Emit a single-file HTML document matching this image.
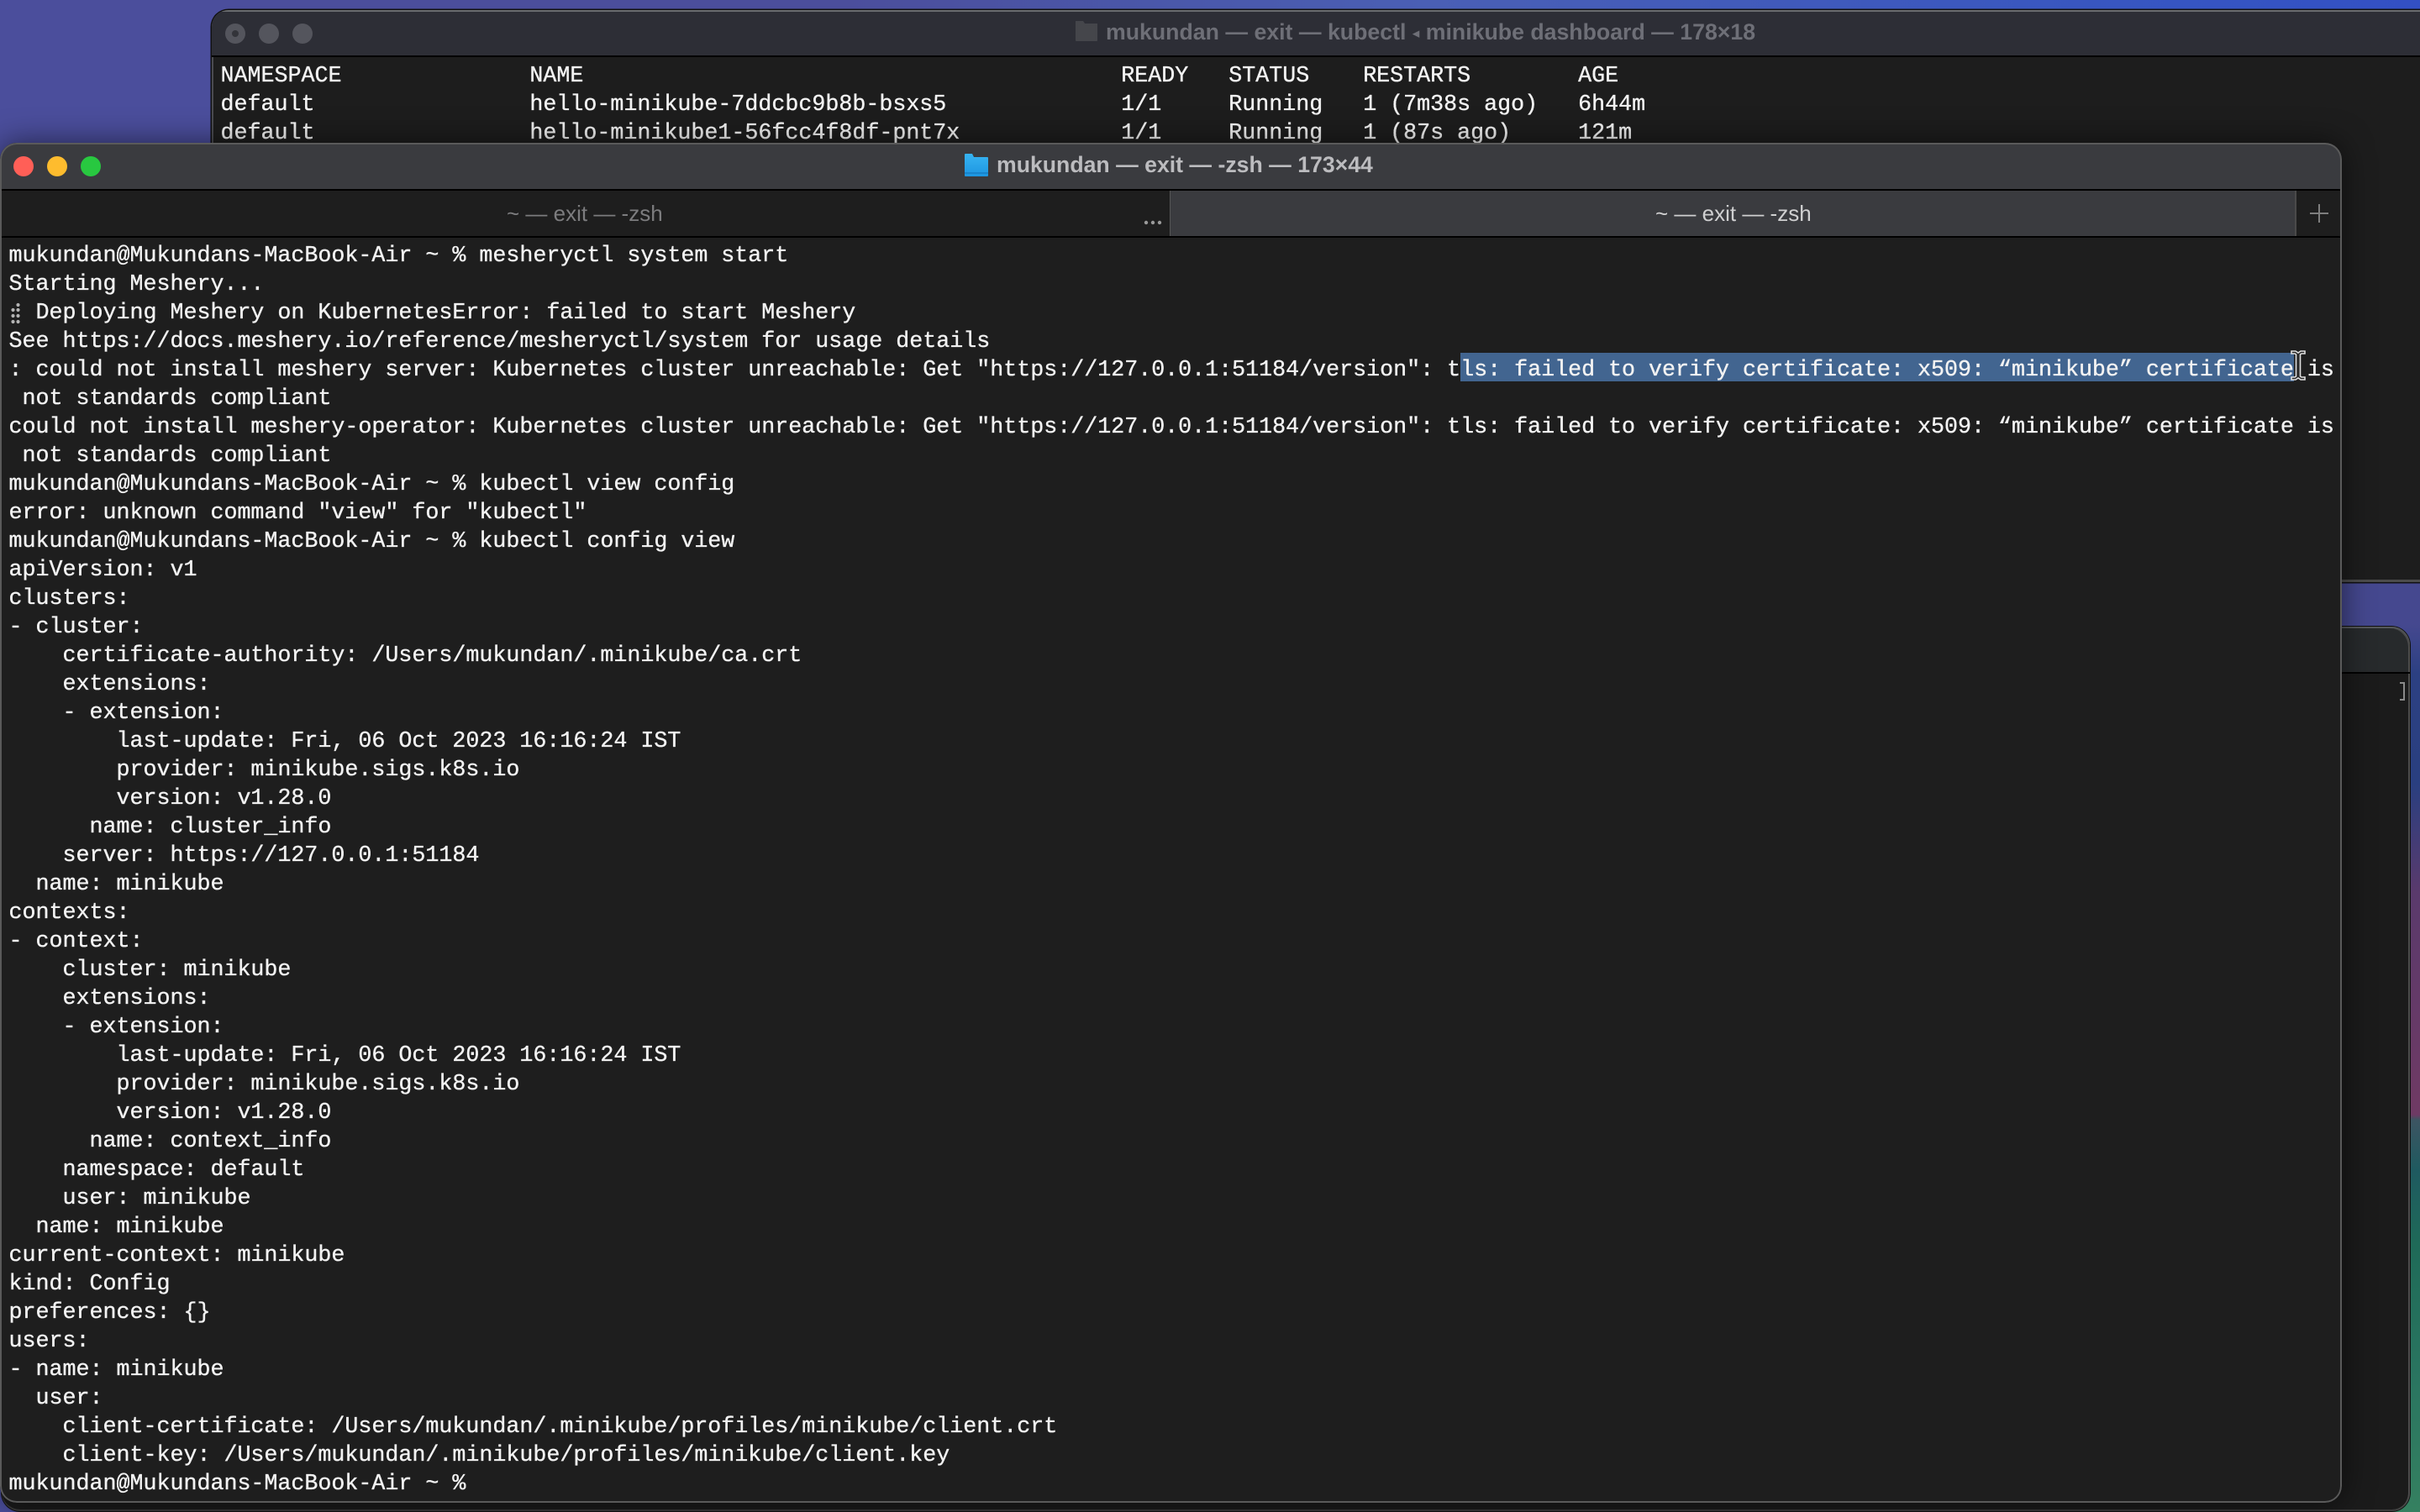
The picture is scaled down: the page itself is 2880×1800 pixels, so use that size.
<!DOCTYPE html>
<html>
<head>
<meta charset="utf-8">
<style>
html,body{margin:0;padding:0;width:2880px;height:1800px;overflow:hidden;background:#2c4a90}
*{box-sizing:border-box}
.abs{position:absolute}
#wall{position:absolute;inset:0;background:linear-gradient(90deg,#4b4e9c 0,#4b4e9c 1000px,#4a5fb5 1700px,#3655c2 2600px,#3350c4 2880px)}
#strip{position:absolute;left:2780px;top:693px;width:100px;height:1107px;background:linear-gradient(180deg,#45488f 0,#45488f 50px,#2c4082 110px,#2a3f80 240px,#5a3a6c 370px,#6e3a64 620px,#6e3a64 634px,#3d5562 640px,#1f5a60 700px,#1f6a58 790px,#2a7560 950px,#358060 1107px)}
pre{margin:0;position:absolute;font-family:"Liberation Mono",monospace;font-size:26.67px;line-height:34px;color:#f2f2f2;-webkit-text-stroke:.35px #f2f2f2;white-space:pre}
#back{position:absolute;left:252px;top:12px;width:2700px;height:681px;background:#1d1d1d;border-radius:20px 20px 0 0;box-shadow:0 0 0 1.5px #111,inset 0 2px 0 #6a6c70,inset 2px 0 0 #4a4b50,inset 0 -3px 0 #4c4c4c;overflow:hidden}
#back .bar{position:absolute;left:0;top:2px;width:100%;height:54px;background:#2d2e36;border-bottom:2px solid #000}
.bl{position:absolute;width:24px;height:24px;border-radius:50%;background:#54555d}
#third{position:absolute;left:2px;top:746px;width:2866px;height:1053px;background:#1b1b1b;border-radius:22px;box-shadow:0 0 0 1px #111,inset 0 2px 0 #55585a,inset -2px 0 0 #4c4c4c,inset 0 -2px 0 #3c3c3c}
#third .bar{position:absolute;left:0;top:2px;width:100%;height:54px;background:#272a2c;border-radius:22px 22px 0 0;border-bottom:2px solid #000;box-shadow:inset -2px 0 0 #4c4c4c}
#front{position:absolute;left:0;top:170px;width:2787px;height:1619px;background:#1e1e1e;border-radius:20px;box-shadow:0 0 36px rgba(0,0,0,.55);overflow:hidden}
#front .edge{position:absolute;inset:0;border-radius:20px;box-shadow:inset 0 0 0 2px #5a5a5a;pointer-events:none;z-index:9}
#front .tbar{position:absolute;left:0;top:0;width:100%;height:57px;background:#3a3b3f;border-bottom:2px solid #000}
#front .tabs{position:absolute;left:0;top:57px;width:100%;height:56px;background:#1e1e1e;border-bottom:2px solid #000}
#front .rtab{position:absolute;left:1392px;top:0;width:1341px;height:54px;background:#3a3b3f;border-left:1px solid #555;border-right:2px solid #4a4a4a}
.tl{position:absolute;width:24px;height:24px;border-radius:50%;top:16px}
.sans{font-family:"Liberation Sans",sans-serif;position:absolute;white-space:pre}
</style>
</head>
<body>
<div id="wall"></div>
<div id="strip"></div>

<div id="back">
  <div class="bar"></div>
  <div class="bl" style="left:16px;top:16px"></div>
  <div class="abs" style="left:24px;top:24px;width:8px;height:8px;border-radius:50%;background:#33343a"></div>
  <div class="bl" style="left:56px;top:16px"></div>
  <div class="bl" style="left:96px;top:16px"></div>
  <svg class="abs" style="left:1027px;top:12px" width="28" height="26" viewBox="0 0 28 26"><path d="M1 1h9l2 3h15v20a1 1 0 0 1-1 1H2a1 1 0 0 1-1-1z" fill="#45464b"/></svg>
  <div class="sans" style="left:1064px;top:11px;font-size:26.7px;line-height:30px;font-weight:700;color:#6e6f77">mukundan — exit — kubectl <span style="font-size:17px;font-family:'DejaVu Sans',sans-serif;vertical-align:2px">◂</span> minikube dashboard — 178×18</div>
  <pre style="left:10.500px;top:62px">NAMESPACE              NAME                                        READY   STATUS    RESTARTS        AGE
default                hello-minikube-7ddcbc9b8b-bsxs5             1/1     Running   1 (7m38s ago)   6h44m
default                hello-minikube1-56fcc4f8df-pnt7x            1/1     Running   1 (87s ago)     121m</pre>
</div>

<div id="third">
  <div class="bar"></div>
  <div class="abs" style="left:2854px;top:66px;width:6px;height:22px;border:2px solid #8a8a8a;border-left:0"></div>
</div>

<div id="front">
  <div class="tbar"></div>
  <div class="tl" style="left:16px;background:#ff5f57"></div>
  <div class="tl" style="left:56px;background:#febc2e"></div>
  <div class="tl" style="left:96px;background:#28c840"></div>
  <svg class="abs" style="left:1148px;top:13px" width="28" height="27" viewBox="0 0 28 27"><defs><linearGradient id="fg" x1="0" y1="0" x2="0" y2="1"><stop offset="0" stop-color="#37b4f2"/><stop offset="1" stop-color="#1d95e0"/></linearGradient></defs><path d="M0 1a1 1 0 0 1 1-1h8l2 4h16a1 1 0 0 1 1 1v21a1 1 0 0 1-1 1H1a1 1 0 0 1-1-1z" fill="url(#fg)"/><rect y="22" width="28" height="2" fill="#1277bd" opacity=".6"/></svg>
  <div class="sans" style="left:1186px;top:11px;font-size:26.65px;line-height:30px;font-weight:700;color:#bcbcbf">mukundan — exit — -zsh — 173×44</div>
  <div class="tabs">
    <div class="sans" style="left:603px;top:12px;font-size:26px;line-height:30px;color:#7c7c7e">~ — exit — -zsh</div>
    <svg class="abs" style="left:1361px;top:34px" width="24" height="8"><circle cx="3" cy="4" r="2.2" fill="#9a9a9a"/><circle cx="11" cy="4" r="2.2" fill="#9a9a9a"/><circle cx="19" cy="4" r="2.2" fill="#9a9a9a"/></svg>
    <div class="rtab"></div>
    <div class="sans" style="left:1970px;top:12px;font-size:26px;line-height:30px;color:#cfcfd0">~ — exit — -zsh</div>
    <svg class="abs" style="left:2749px;top:16px" width="22" height="22"><path d="M11 0v22M0 11h22" stroke="#7e7e7e" stroke-width="2"/></svg>
  </div>
  <div class="abs" style="left:1738px;top:250px;width:992px;height:34px;background:#426590"></div>
  <svg class="abs" style="left:10px;top:188px" width="18" height="30"><g fill="#b4b4b4"><circle cx="11.5" cy="5" r="2.1"/><circle cx="5.5" cy="11" r="2.1"/><circle cx="11.5" cy="11" r="2.1"/><circle cx="5.5" cy="18" r="2.1"/><circle cx="11.5" cy="18" r="2.1"/><circle cx="5.5" cy="25" r="2.1"/><circle cx="11.5" cy="25" r="2.1"/></g></svg>
<pre style="left:10.500px;top:118px">mukundan@Mukundans-MacBook-Air ~ % mesheryctl system start
Starting Meshery...
  Deploying Meshery on KubernetesError: failed to start Meshery
See https://docs.meshery.io/reference/mesheryctl/system for usage details
: could not install meshery server: Kubernetes cluster unreachable: Get "https://127.0.0.1:51184/version": tls: failed to verify certificate: x509: “minikube” certificate is
 not standards compliant
could not install meshery-operator: Kubernetes cluster unreachable: Get "https://127.0.0.1:51184/version": tls: failed to verify certificate: x509: “minikube” certificate is
 not standards compliant
mukundan@Mukundans-MacBook-Air ~ % kubectl view config
error: unknown command "view" for "kubectl"
mukundan@Mukundans-MacBook-Air ~ % kubectl config view
apiVersion: v1
clusters:
- cluster:
    certificate-authority: /Users/mukundan/.minikube/ca.crt
    extensions:
    - extension:
        last-update: Fri, 06 Oct 2023 16:16:24 IST
        provider: minikube.sigs.k8s.io
        version: v1.28.0
      name: cluster_info
    server: https://127.0.0.1:51184
  name: minikube
contexts:
- context:
    cluster: minikube
    extensions:
    - extension:
        last-update: Fri, 06 Oct 2023 16:16:24 IST
        provider: minikube.sigs.k8s.io
        version: v1.28.0
      name: context_info
    namespace: default
    user: minikube
  name: minikube
current-context: minikube
kind: Config
preferences: {}
users:
- name: minikube
  user:
    client-certificate: /Users/mukundan/.minikube/profiles/minikube/client.crt
    client-key: /Users/mukundan/.minikube/profiles/minikube/client.key
mukundan@Mukundans-MacBook-Air ~ %</pre>
  <svg class="abs" style="left:2726px;top:246px;z-index:5" width="18" height="38" viewBox="0 0 18 38"><path d="M1 2h5l3 2 3-2h5v3h-4l-1.500 1v26l1.500 1h4v3h-5l-3-2-3 2H1v-3h4l1.500-1V6L5 5H1z" fill="#2a2a2a" stroke="#e0e0e0" stroke-width="1.600"/></svg>
  <div class="edge"></div>
</div>
</body>
</html>
